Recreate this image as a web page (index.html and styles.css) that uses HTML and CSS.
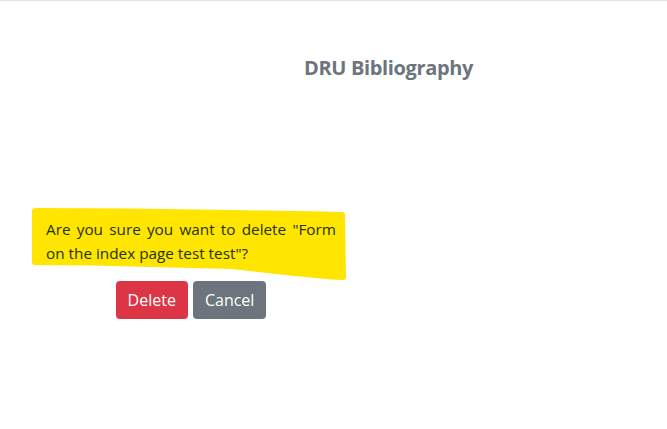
FILE: index.html
```html
<!DOCTYPE html>
<html lang="en">
<head>
<meta charset="utf-8">
<title>DRU Bibliography</title>
<link rel="stylesheet" href="styles.css">
</head>
<body>
<div class="topline"></div>
<header class="title-row">
  <h1 class="title">DRU Bibliography</h1>
</header>
<main class="confirm">
  <div class="message">
    <svg class="highlight" width="316" height="76" viewBox="0 0 316 76" aria-hidden="true">
      <path d="M0,4 Q0,1 3,1 L100,1.5 L200,3 L290,4.5 L310,5 Q313,5 313,8 L313.5,40 L314,70 Q314,73 311,73 L300,72.5 L262,69 L200,62 L120,60 L60,58.5 L3,58 Q0,58 0,55 Z" fill="#ffe500"/>
    </svg>
    <p class="text">Are you sure you want to delete "Form on the index page test test"?</p>
  </div>
  <div class="actions">
    <button class="btn btn-danger" type="button">Delete</button>
    <button class="btn btn-secondary" type="button">Cancel</button>
  </div>
</main>
</body>
</html>
```
FILE: styles.css
```css
html, body {
  margin: 0;
  padding: 0;
  background: #ffffff;
}
body {
  font-family: "Open Sans", "Noto Sans", "Liberation Sans", sans-serif;
  font-size: 16px;
  line-height: 1.5;
  color: #212529;
}
.topline {
  height: 1px;
  background: #e2e2e2;
}
.title-row {
  padding: 55px 0 0 304px;
}
.title {
  margin: 0;
  font-size: 20px;
  font-weight: 700;
  line-height: 1.2;
  color: #6c757d;
  letter-spacing: -0.35px;
}
.confirm {
  margin-top: 127px;
  width: 290px;
  margin-left: 46px;
}
.message {
  position: relative;
  padding: 10px 0 11px;
}
.highlight {
  position: absolute;
  left: -14px;
  top: 0;
  z-index: 0;
}
.text {
  position: relative;
  z-index: 1;
  margin: 0;
  text-align: justify;
  color: #22330f;
  font-size: 15.3px;
  line-height: 24px;
}
.actions {
  display: flex;
  justify-content: center;
  gap: 5px;
  margin-top: 5px;
}
.btn {
  font-family: inherit;
  font-size: 16px;
  line-height: 24px;
  padding: 7px 12px;
  border: 0;
  border-radius: 4px;
  color: #ffffff;
  cursor: pointer;
}
.btn-danger {
  background: #dc3545;
}
.btn-secondary {
  background: #6c757d;
}
```
